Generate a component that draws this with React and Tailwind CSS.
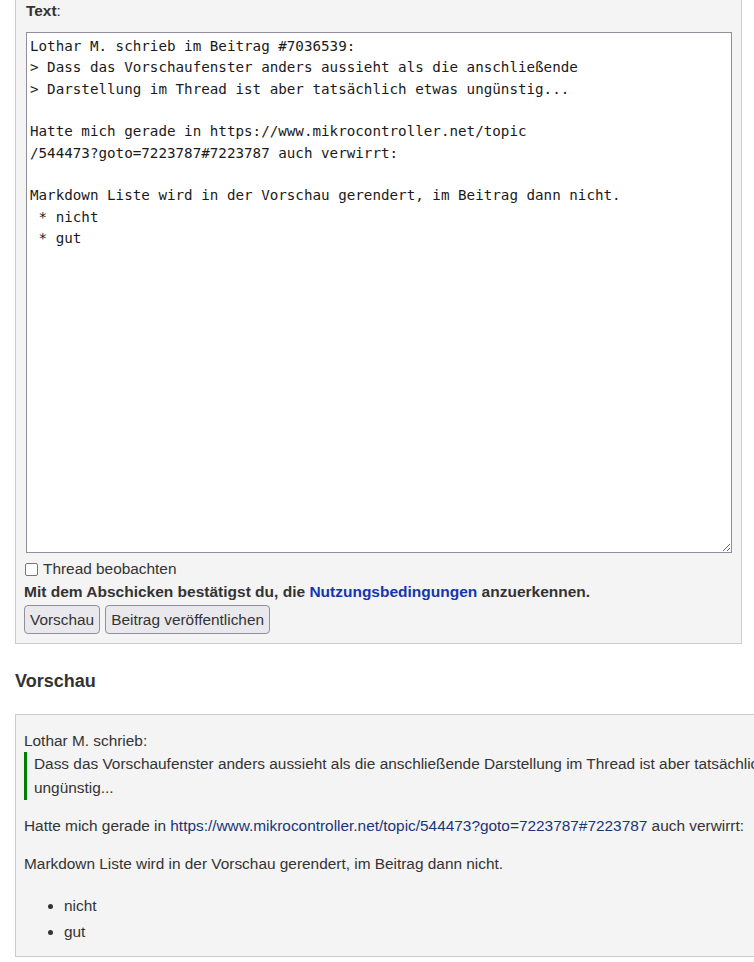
import React from "react";

const textValue = `Lothar M. schrieb im Beitrag #7036539:
> Dass das Vorschaufenster anders aussieht als die anschließende
> Darstellung im Thread ist aber tatsächlich etwas ungünstig...

Hatte mich gerade in https://www.mikrocontroller.net/topic
/544473?goto=7223787#7223787 auch verwirrt:

Markdown Liste wird in der Vorschau gerendert, im Beitrag dann nicht.
 * nicht
 * gut`;

export default function App() {
  return (
    <div
      className="w-[754px] h-[962px] overflow-hidden bg-white text-[#333]"
      style={{ fontFamily: '"Liberation Sans", Arial, sans-serif' }}
    >
      <div className="pl-[15px]">
        {/* Form panel */}
        <div className="-mt-[12px] w-[727px] border border-[#cccccc] bg-[#f4f4f4] pl-[10px] pr-[9px] pt-[12px] pb-[9px] text-[15.4px]">
          <div className="leading-[20px]">
            <b>Text</b>:
          </div>
          <textarea
            readOnly
            defaultValue={textValue}
            spellCheck={false}
            className="mt-[11px] block h-[521px] w-[706px] resize border border-[#8f8f9d] bg-white px-[3px] py-[3px] text-[14.22px] leading-[21.33px] text-[#1a1a1a] outline-none"
            style={{ fontFamily: '"DejaVu Sans Mono", monospace' }}
          />
          <label className="mt-[7px] flex items-center leading-[18px]">
            <span className="ml-[-1px] mr-[5px] inline-block h-[13px] w-[13px] rounded-[2px] border border-[#767676] bg-white" />
            <span>Thread beobachten</span>
          </label>
          <div className="-ml-[2px] mt-[5px] text-[15.5px] font-bold leading-[18px]">
            Mit dem Abschicken bestätigst du, die{" "}
            <a className="text-[#1535b0]" href="#">
              Nutzungsbedingungen
            </a>{" "}
            anzuerkennen.
          </div>
          <div className="-ml-[2px] mt-[4px] flex gap-[5px]">
            <button className="h-[29px] rounded-[4px] border border-[#8f8f9d] bg-[#e9e9ed] px-[5px] text-[15.4px] text-[#333]">
              Vorschau
            </button>
            <button className="h-[29px] rounded-[4px] border border-[#8f8f9d] bg-[#e9e9ed] px-[5px] text-[15.4px] text-[#333]">
              Beitrag veröffentlichen
            </button>
          </div>
        </div>

        {/* Preview heading */}
        <h2 className="mt-[26px] text-[18px] font-bold leading-[22px]">Vorschau</h2>

        {/* Preview panel */}
        <div className="mt-[22px] w-[855px] border border-[#cccccc] bg-[#f4f4f4] pl-[8px] pr-[20px] pt-[14px] pb-[11px] text-[15.4px] leading-[24px]">
          <div>Lothar M. schrieb:</div>
          <blockquote className="mt-[-1px] border-l-[3px] border-[#008000] pl-[7px]">
            Dass das Vorschaufenster anders aussieht als die anschließende Darstellung im Thread ist aber tatsächlich etwas ungünstig...
          </blockquote>
          <p className="mt-[14px]">
            Hatte mich gerade in{" "}
            <a className="text-[#1a3577]" href="#">
              https://www.mikrocontroller.net/topic/544473?goto=7223787#7223787
            </a>{" "}
            auch verwirrt:
          </p>
          <p className="mt-[14px]">Markdown Liste wird in der Vorschau gerendert, im Beitrag dann nicht.</p>
          <ul className="mt-[17px] list-disc pl-[40px] leading-[26px]">
            <li>nicht</li>
            <li>gut</li>
          </ul>
        </div>
      </div>
    </div>
  );
}
